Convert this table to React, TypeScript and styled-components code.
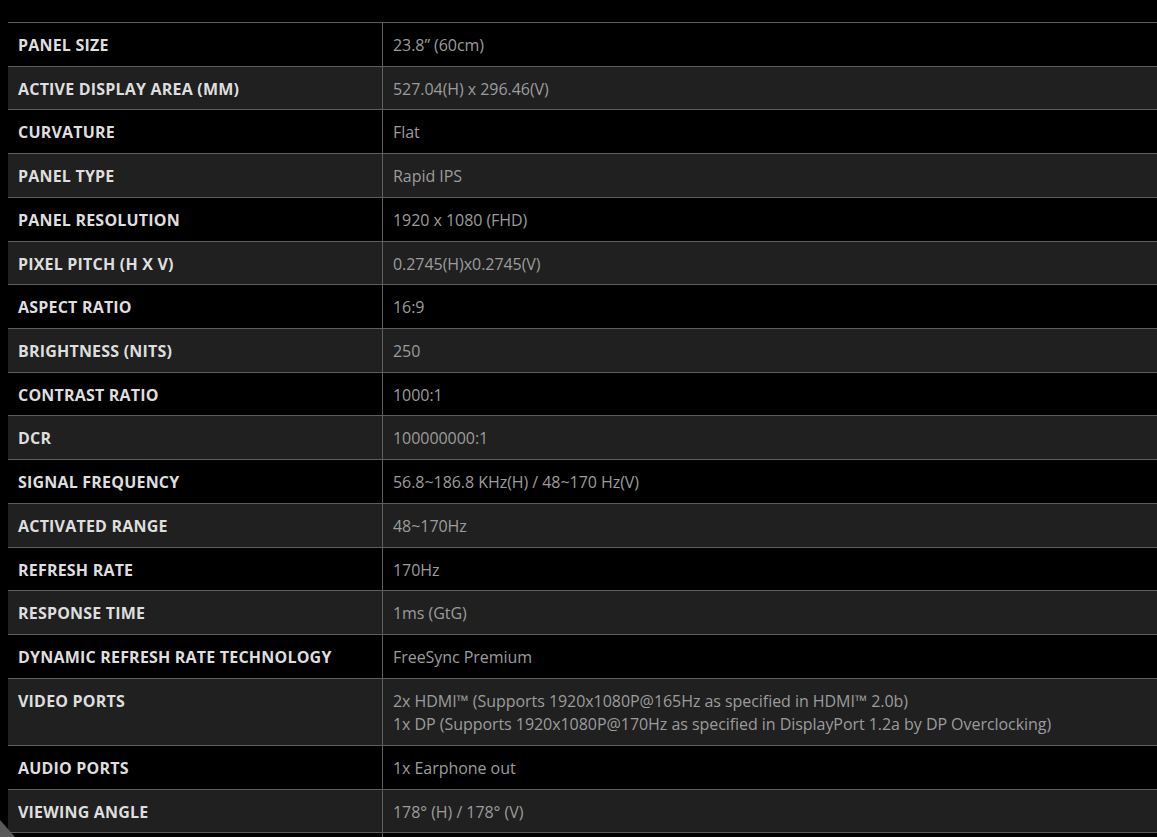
import React from "react";
import styled, { createGlobalStyle } from "styled-components";

const Global = createGlobalStyle`
  html, body { margin: 0; padding: 0; background: #000; overflow: hidden; }
  body { font-family: "Open Sans", "Noto Sans", sans-serif; }
`;

const Page = styled.div`
  padding: 22px 0 0 8px;
  height: 837px;
  box-sizing: border-box;
  overflow: hidden;
  position: relative;
`;

const Table = styled.table`
  width: 100%;
  border-collapse: collapse;
  font-size: 16px;
`;

const Row = styled.tr<{ $alt: boolean }>`
  background: ${(p) => (p.$alt ? "#202020" : "#000")};
  border-top: 1px solid #5e5e5e;
`;

const Label = styled.td`
  width: 354px;
  padding: 11px 10px 8.4px;
  line-height: 23.33px;
  color: #dedede;
  font-weight: 700;
  vertical-align: top;
  border-right: 1px solid #5e5e5e;
  letter-spacing: 0.2px;
`;

const Value = styled.td`
  padding: 11px 10px 8.4px;
  line-height: 23.33px;
  color: #9c9c9c;
  vertical-align: top;
  letter-spacing: -0.05px;
`;

const Corner = styled.div`
  position: absolute;
  left: 0;
  bottom: 0;
  width: 0;
  height: 0;
  border-bottom: 17px solid #5a5a5a;
  border-right: 15px solid transparent;
`;

const specs: [string, string[]][] = [
  ["PANEL SIZE", ["23.8\u201D (60cm)"]],
  ["ACTIVE DISPLAY AREA (MM)", ["527.04(H) x 296.46(V)"]],
  ["CURVATURE", ["Flat"]],
  ["PANEL TYPE", ["Rapid IPS"]],
  ["PANEL RESOLUTION", ["1920 x 1080 (FHD)"]],
  ["PIXEL PITCH (H X V)", ["0.2745(H)x0.2745(V)"]],
  ["ASPECT RATIO", ["16:9"]],
  ["BRIGHTNESS (NITS)", ["250"]],
  ["CONTRAST RATIO", ["1000:1"]],
  ["DCR", ["100000000:1"]],
  ["SIGNAL FREQUENCY", ["56.8~186.8 KHz(H) / 48~170 Hz(V)"]],
  ["ACTIVATED RANGE", ["48~170Hz"]],
  ["REFRESH RATE", ["170Hz"]],
  ["RESPONSE TIME", ["1ms (GtG)"]],
  ["DYNAMIC REFRESH RATE TECHNOLOGY", ["FreeSync Premium"]],
  [
    "VIDEO PORTS",
    [
      "2x HDMI\u2122 (Supports 1920x1080P@165Hz as specified in HDMI\u2122 2.0b)",
      "1x DP (Supports 1920x1080P@170Hz as specified in DisplayPort 1.2a by DP Overclocking)",
    ],
  ],
  ["AUDIO PORTS", ["1x Earphone out"]],
  ["VIEWING ANGLE", ["178\u00B0 (H) / 178\u00B0 (V)"]],
  ["", []],
];

export default function App() {
  return (
    <>
      <Global />
      <Page>
        <Table>
          <tbody>
            {specs.map(([k, v], i) => (
              <Row key={i} $alt={i % 2 === 1}>
                <Label>{k}</Label>
                <Value>
                  {v.map((line, j) => (
                    <div key={j}>{line}</div>
                  ))}
                </Value>
              </Row>
            ))}
          </tbody>
        </Table>
        <Corner />
      </Page>
    </>
  );
}
